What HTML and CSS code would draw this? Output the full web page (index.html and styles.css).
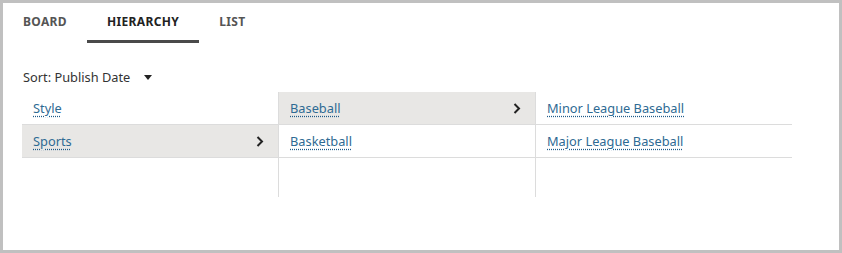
FILE: index.html
```html
<!DOCTYPE html>
<html lang="en">
<head>
    <meta charset="UTF-8">
    <title>Hierarchy</title>
    <link rel="stylesheet" href="styles.css">
</head>
<body>

<div class="frame">
    <div class="tabs">
        <div class="tab">Board</div>
        <div class="tab active">Hierarchy</div>
        <div class="tab">List</div>
    </div>

    <div class="content">
        <div class="sort">
            Sort: Publish Date
            <span class="caret"></span>
        </div>

        <div class="columns">
            <div class="column">
                <div class="row"><a href="#">Style</a></div>
                <div class="row selected">
                    <a href="#">Sports</a>
                    <svg class="chevron" width="8" height="11" viewBox="0 0 8 11"><polyline points="1.5,1 6,5.5 1.5,10" fill="none" stroke="#222" stroke-width="2"/></svg>
                </div>
            </div>
            <div class="column">
                <div class="row selected">
                    <a href="#">Baseball</a>
                    <svg class="chevron" width="8" height="11" viewBox="0 0 8 11"><polyline points="1.5,1 6,5.5 1.5,10" fill="none" stroke="#222" stroke-width="2"/></svg>
                </div>
                <div class="row"><a href="#">Basketball</a></div>
            </div>
            <div class="column last">
                <div class="row"><a href="#">Minor League Baseball</a></div>
                <div class="row"><a href="#">Major League Baseball</a></div>
            </div>
        </div>
    </div>
</div>

</body>
</html>
```

FILE: styles.css
```css
html, body {
    margin: 0;
    padding: 0;
}
body {
    font-family: "Noto Sans", "Open Sans", sans-serif;
    color: #333;
    background: #fff;
}
.frame {
    width: 842px;
    height: 253px;
    box-sizing: border-box;
    border: 3px solid #c0c0c0;
}
.tabs {
    display: flex;
}
.tab {
    padding: 0 20px;
    height: 37px;
    line-height: 37px;
    border-bottom: 3px solid transparent;
    font-size: 12px;
    font-weight: bold;
    letter-spacing: 0.35px;
    text-transform: uppercase;
    color: #555;
}
.tab.active {
    color: #222;
    border-bottom-color: #4a4a4a;
}
.content {
    padding: 0 19px;
}
.sort {
    margin-top: 24px;
    height: 20px;
    line-height: 20px;
    font-size: 12.8px;
    color: #333;
    padding-left: 1px;
    display: flex;
    align-items: center;
}
.caret {
    margin-left: 14px;
    width: 0;
    height: 0;
    border-left: 4px solid transparent;
    border-right: 4px solid transparent;
    border-top: 5px solid #222;
}
.columns {
    margin-top: 5px;
    display: flex;
}
.column {
    width: 256px;
    height: 105px;
    border-right: 1px solid #dcdcdc;
}
.column.last {
    border-right: none;
}
.row {
    height: 32px;
    border-bottom: 1px solid #dcdcdc;
    display: flex;
    align-items: center;
    justify-content: space-between;
    padding: 0 14px 0 11px;
    font-size: 12.8px;
}
.row.selected {
    background: #e8e7e5;
}
.row a {
    color: #2e6a93;
    text-decoration: underline dotted #1f5c8a;
    text-underline-offset: 3px;
}
.chevron {
    display: block;
}
```
